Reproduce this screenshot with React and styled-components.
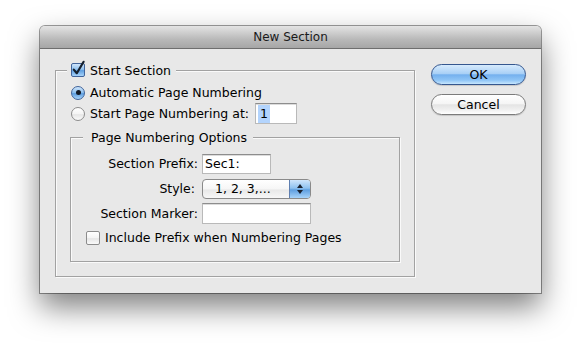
import React from "react";
import styled, { createGlobalStyle } from "styled-components";

const Global = createGlobalStyle`
  html, body {
    margin: 0;
    background: #ffffff;
  }
  body {
    font-family: "DejaVu Sans", "Liberation Sans", sans-serif;
    font-size: 12.5px;
    color: #000;
  }
`;

const Page = styled.div`
  width: 582px;
  height: 349px;
  box-sizing: border-box;
  padding: 26px 0 0 40px;
  overflow: hidden;
`;

const Window = styled.div`
  width: 501px;
  height: 267px;
  display: flex;
  flex-direction: column;
  background: #e8e8e8;
  border-radius: 5px 5px 0 0;
  box-shadow: 0 0 0 1px rgba(0, 0, 0, 0.38), 0 14px 30px rgba(0, 0, 0, 0.5);
  overflow: hidden;
`;

const TitleBar = styled.div`
  height: 22px;
  flex: none;
  display: flex;
  align-items: center;
  justify-content: center;
  background: linear-gradient(#e4e4e4, #b9b9b9 60%, #a6a6a6);
  border-bottom: 1px solid #6e6e6e;
  font-size: 12px;
  color: #1a1a1a;
`;

const Body = styled.div`
  display: flex;
  gap: 16px;
  padding: 13px 15px 0 15px;
`;

const Group = styled.fieldset`
  margin: 0;
  box-sizing: border-box;
  width: ${(p) => p.$width}px;
  min-width: 0;
  margin-left: ${(p) => p.$offset || 0}px;
  margin-top: ${(p) => p.$top || 0}px;
  padding: ${(p) => p.$pad};
  border: 1px solid #a2a2a2;
  box-shadow: inset 1px 1px 0 #fafafa, 1px 1px 0 #fafafa;
  display: flex;
  flex-direction: column;
`;

const Legend = styled.legend`
  display: flex;
  align-items: center;
  gap: 5px;
  height: ${(p) => p.$h}px;
  padding: 0 ${(p) => p.$right}px 0 ${(p) => p.$left}px;
  margin-left: ${(p) => p.$shift}px;
  background: #e8e8e8;
`;

const OptionRow = styled.div`
  display: flex;
  align-items: center;
  gap: 5px;
  height: 21px;
  padding-left: ${(p) => p.$indent || 0}px;
  margin-top: ${(p) => p.$top || 0}px;
`;

const FormGrid = styled.div`
  display: grid;
  grid-template-columns: 127px auto;
  column-gap: 4px;
  row-gap: 4px;
  grid-auto-rows: 21px;
  align-items: center;
`;

const Label = styled.span`
  text-align: right;
  padding-right: ${(p) => p.$nudge || 0}px;
  white-space: nowrap;
`;

const TextField = styled.div`
  box-sizing: border-box;
  width: ${(p) => p.$width}px;
  height: ${(p) => p.$height || 21}px;
  background: #fff;
  border: 1px solid #b9b9b9;
  border-top-color: #8d8d8d;
  box-shadow: inset 0 1px 0 #dcdcdc;
  display: flex;
  align-items: center;
  padding-left: 2px;
  margin-left: ${(p) => p.$left || 0}px;
`;

const Selection = styled.span`
  background: #b3d4fd;
  padding: 1px 2px;
  line-height: 16px;
`;

const Box = styled.span`
  flex: none;
  width: 14px;
  height: 14px;
  box-sizing: border-box;
  border-radius: ${(p) => (p.$round ? "50%" : "2px")};
  border: 1px solid ${(p) => (p.$on ? "#41649a" : "#8c8c8c")};
  background: ${(p) =>
    p.$on
      ? "linear-gradient(#cfe5fb 0%, #8fc1ef 45%, #5f9fe0 55%, #a7d3fa 100%)"
      : "linear-gradient(#ffffff 0%, #f4f4f4 50%, #e6e6e6 55%, #fafafa 100%)"};
  display: flex;
  align-items: center;
  justify-content: center;
  position: relative;
  margin-left: ${(p) => p.$left || 0}px;
  & svg {
    overflow: visible;
  }
`;

const Dot = styled.span`
  width: 5px;
  height: 5px;
  border-radius: 50%;
  background: #121a26;
`;

const Popup = styled.div`
  box-sizing: border-box;
  width: 109px;
  height: 20px;
  display: flex;
  border: 1px solid #8a8a8a;
  border-radius: 4px;
  overflow: hidden;
  background: linear-gradient(#ffffff 0%, #f6f6f6 50%, #e8e8e8 55%, #f7f7f7 100%);
`;

const PopupText = styled.span`
  flex: 1;
  display: flex;
  align-items: center;
  padding-left: 12px;
`;

const PopupArrows = styled.span`
  width: 20px;
  display: flex;
  align-items: center;
  justify-content: center;
  border-left: 1px solid #5f7fb0;
  background: linear-gradient(#cfe5fb 0%, #8fc1ef 45%, #5f9fe0 55%, #a7d3fa 100%);
`;

const ButtonColumn = styled.div`
  display: flex;
  flex-direction: column;
  gap: 9px;
  padding-top: 2px;
`;

const Button = styled.button`
  width: 95px;
  height: 21px;
  border-radius: 11px;
  font-family: inherit;
  font-size: 12.5px;
  color: #000;
  padding: 0;
  border: 1px solid ${(p) => (p.$primary ? "#35578f" : "#7b7b7b")};
  background: ${(p) =>
    p.$primary
      ? "linear-gradient(#d7ebfd 0%, #a9d0f6 45%, #74b0ee 52%, #8fc5f6 80%, #c6e6fe 100%)"
      : "linear-gradient(#ffffff 0%, #f5f5f5 45%, #e4e4e4 52%, #f1f1f1 80%, #ffffff 100%)"};
  box-shadow: 0 1px 1px rgba(0, 0, 0, 0.15);
`;

const Check = () => (
  <svg width="14" height="14" viewBox="0 0 14 14">
    <path d="M2.8 6.6 L5.8 10.2 L12.6 -1.2" fill="none" stroke="#15202e" strokeWidth="2.2" strokeLinecap="round" strokeLinejoin="round" />
  </svg>
);

const Stepper = () => (
  <svg width="8" height="12" viewBox="0 0 8 12">
    <path d="M4 1 L7 5 L1 5 Z" fill="#1a2230" />
    <path d="M4 11 L7 7 L1 7 Z" fill="#1a2230" />
  </svg>
);

export default function App() {
  return (
    <Page>
      <Global />
      <Window>
        <TitleBar>New Section</TitleBar>
        <Body>
          <Group $width={360} $pad="4px 0 14px 14px">
            <Legend $h={16} $left={4} $right={5} $shift={-3}>
              <Box $on>
                <Check />
              </Box>
              Start Section
            </Legend>
            <OptionRow>
              <Box $round $on $left={1}>
                <Dot />
              </Box>
              Automatic Page Numbering
            </OptionRow>
            <OptionRow>
              <Box $round $left={1} />
              Start Page Numbering at:
              <TextField $width={42} $left={1}>
                <Selection>1</Selection>
              </TextField>
            </OptionRow>
            <Group $width={330} $top={6} $pad="8px 0 13px 0">
              <Legend $h={15} $left={8} $right={6} $shift={12}>
                Page Numbering Options
              </Legend>
              <FormGrid>
                <Label>Section Prefix:</Label>
                <TextField $width={69} $height={20}>
                  Sec1:
                </TextField>
                <Label $nudge={3}>Style:</Label>
                <Popup>
                  <PopupText>1, 2, 3,...</PopupText>
                  <PopupArrows>
                    <Stepper />
                  </PopupArrows>
                </Popup>
                <Label>Section Marker:</Label>
                <TextField $width={109} />
              </FormGrid>
              <OptionRow $indent={15} $top={3}>
                <Box />
                Include Prefix when Numbering Pages
              </OptionRow>
            </Group>
          </Group>
          <ButtonColumn>
            <Button $primary>OK</Button>
            <Button>Cancel</Button>
          </ButtonColumn>
        </Body>
      </Window>
    </Page>
  );
}
